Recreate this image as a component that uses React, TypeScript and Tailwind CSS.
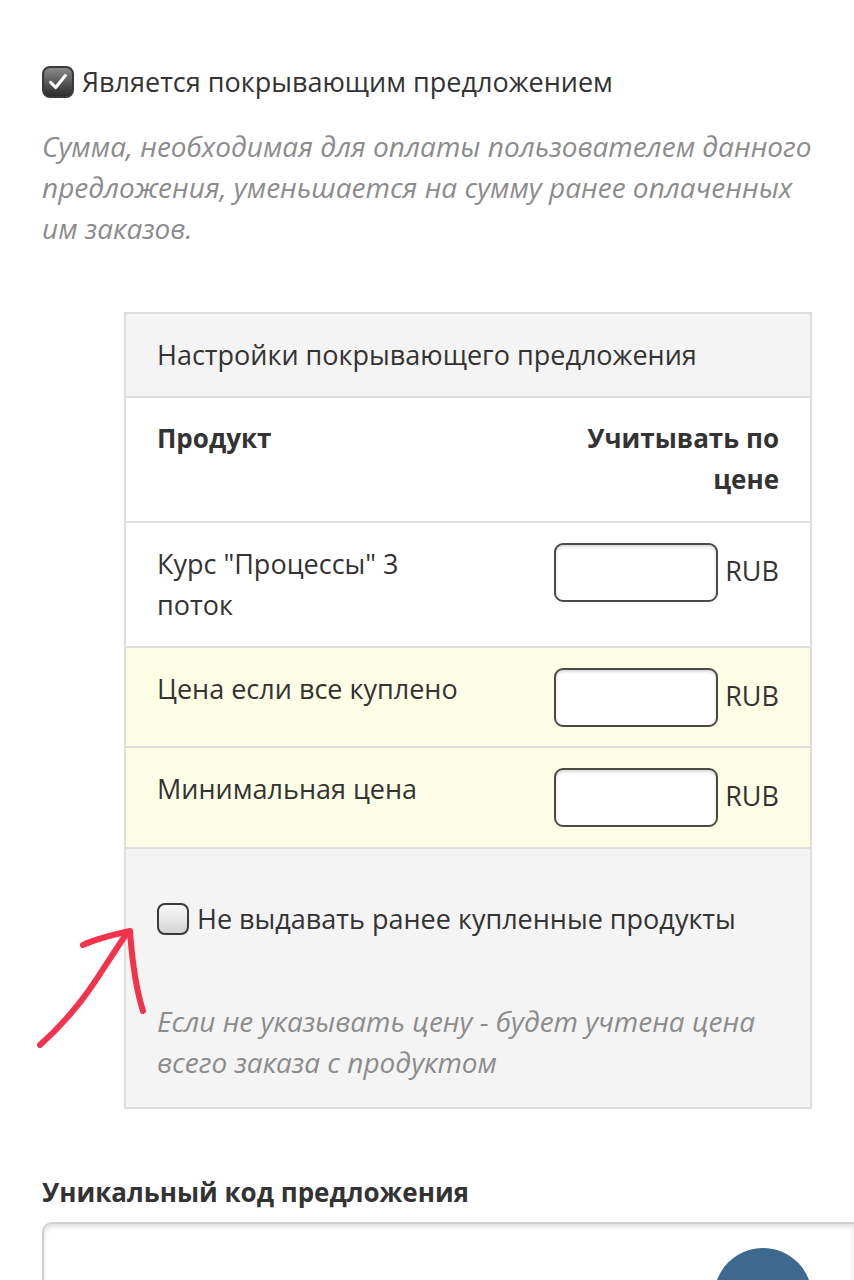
import React from 'react'

const font = { fontFamily: '"Open Sans", Lato, sans-serif' }

const CheckBox = ({ checked }: { checked: boolean }) => (
  <span
    className={
      'inline-flex items-center justify-center w-[32px] h-[32px] rounded-[8px] border-2 border-[#3a3a3a] shrink-0 ' +
      (checked
        ? 'bg-gradient-to-b from-[#8a8a8a] to-[#2e2e2e]'
        : 'bg-gradient-to-b from-[#fafafa] to-[#d4d4d4]')
    }
  >
    {checked && (
      <svg width="22" height="22" viewBox="0 0 24 24">
        <path d="M4 12.5 L9.5 18 L20 5" fill="none" stroke="#fff" strokeWidth="3.4" strokeLinecap="round" strokeLinejoin="round" />
      </svg>
    )}
  </span>
)

const PriceInput = () => (
  <div className="flex items-start gap-[7px] shrink-0">
    <div className="w-[164px] h-[59px] rounded-[9px] border-2 border-[#4a4a44] bg-white shadow-[inset_0_2px_3px_rgba(0,0,0,0.15)]" />
    <span className="text-[27px] text-[#333] leading-none mt-[14px]">RUB</span>
  </div>
)

export default function App() {
  return (
    <div className="w-[854px] h-[1280px] overflow-hidden bg-white text-[#333]" style={font}>
      <div className="pl-[42px] pt-[66px]">
        <label className="flex items-center gap-[8px]">
          <CheckBox checked />
          <span className="text-[27px] leading-[32px]">Является покрывающим предложением</span>
        </label>
        <p className="mt-[28px] pr-[30px] text-[28px] leading-[41px] italic text-[#8c8c8c]">
          Сумма, необходимая для оплаты пользователем данного предложения, уменьшается на сумму ранее оплаченных им заказов.
        </p>
      </div>

      <div className="ml-[124px] mr-[42px] mt-[63px] border-2 border-[#dedede]">
        <div className="bg-[#f4f4f4] h-[84px] flex items-center px-[31px] text-[27px] border-b-2 border-[#dedede]">
          Настройки покрывающего предложения
        </div>
        <div className="bg-white h-[125px] flex justify-between px-[31px] pt-[20px] text-[26px] font-bold leading-[41px] border-b-2 border-[#dedede]">
          <span>Продукт</span>
          <span className="text-right w-[200px]">Учитывать по цене</span>
        </div>
        <div className="bg-white h-[125px] flex justify-between px-[31px] pt-[20px] text-[27px] leading-[41px] border-b-2 border-[#dedede]">
          <span className="w-[280px]">Курс "Процессы" 3 поток</span>
          <PriceInput />
        </div>
        <div className="bg-[#fefde6] h-[100px] flex justify-between px-[31px] pt-[20px] text-[27px] leading-[41px] border-b-2 border-[#dedede]">
          <span>Цена если все куплено</span>
          <PriceInput />
        </div>
        <div className="bg-[#fefde6] h-[101px] flex justify-between px-[31px] pt-[20px] text-[27px] leading-[41px] border-b-2 border-[#dedede]">
          <span>Минимальная цена</span>
          <PriceInput />
        </div>
        <div className="relative bg-[#f4f4f4] h-[258px] px-[31px] pt-[54px]">
          <label className="flex items-center gap-[8px]">
            <CheckBox checked={false} />
            <span className="text-[27px] leading-[32px]">Не выдавать ранее купленные продукты</span>
          </label>
          <p className="mt-[66px] pr-[20px] text-[28px] leading-[41px] italic text-[#8c8c8c]">
            Если не указывать цену - будет учтена цена всего заказа с продуктом
          </p>

          {/* red arrow annotation */}
          <svg className="absolute left-[-100px] top-[70px]" width="140" height="150" viewBox="0 0 140 150">
            <path
              d="M14 126 C34 108 52 88 68 64 C80 46 90 30 101 14 M57 26 C72 19 90 15 104 12 C106 40 110 70 117 92"
              fill="none"
              stroke="#f2334b"
              strokeWidth="6"
              strokeLinecap="round"
              strokeLinejoin="round"
            />
          </svg>
        </div>
      </div>

      <div className="pl-[42px] mt-[64px]">
        <h3 className="text-[26px] font-bold">Уникальный код предложения</h3>
        <div className="relative mt-[10px] h-[80px] rounded-tl-[10px] border-2 border-r-0 border-[#d0d0d0] shadow-[inset_0_3px_5px_rgba(0,0,0,0.12)]">
          <div className="absolute left-[670px] top-[24px] w-[98px] h-[98px] rounded-full bg-[#3d698e]" />
        </div>
      </div>
    </div>
  )
}
